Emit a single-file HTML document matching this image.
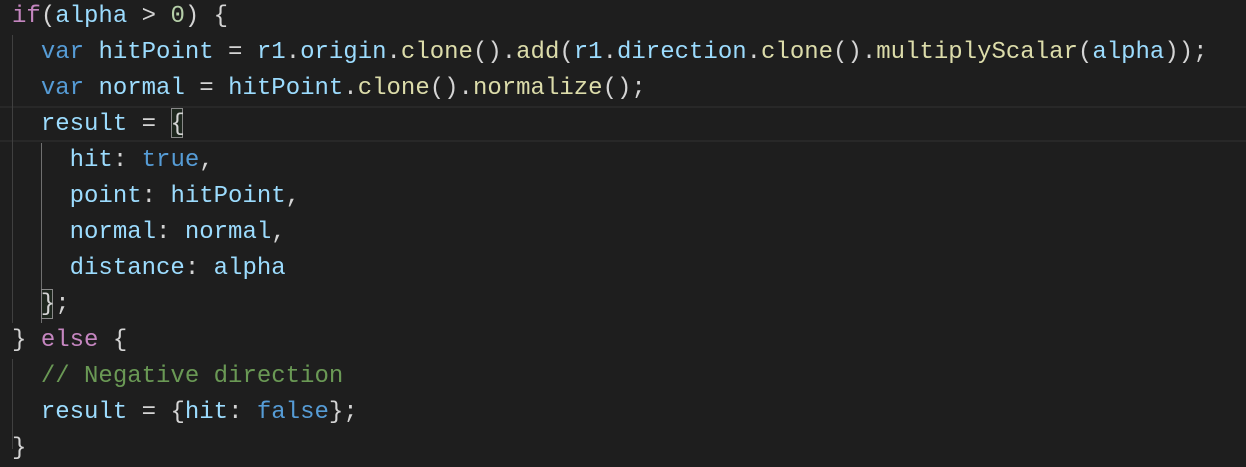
<!DOCTYPE html>
<html><head><style>
body{margin:0;background:#1e1e1e;width:1246px;height:462px;overflow:hidden;position:relative}
.c{position:absolute;left:12px;top:-1px;font-family:"Liberation Mono","DejaVu Sans Mono",monospace;font-size:24px;line-height:36px;color:#d4d4d4;white-space:pre}
.k{color:#c586c0}.v{color:#9cdcfe}.s{color:#569cd6}.f{color:#dcdcaa}.n{color:#b5cea8}.m{color:#6a9955}
.g{position:absolute;width:1px;background:#404040}
.hl{position:absolute;left:0;right:0;top:106px;height:32px;border-top:2px solid #282828;border-bottom:2px solid #282828}
.br{position:absolute;width:12px;height:30px;border:1px solid #888;background:rgba(30,60,30,.3);box-sizing:border-box}
</style></head><body>
<div class="hl"></div>
<div class="g" style="left:12px;top:35px;height:288px"></div>
<div class="g" style="left:41px;top:143px;height:180px;background:#707070"></div>
<div class="g" style="left:12px;top:359px;height:90px"></div>
<div class="br" style="left:171px;top:108px"></div>
<div class="br" style="left:41px;top:289px"></div>
<div class="c"><span class="k">if</span>(<span class="v">alpha</span> &gt; <span class="n">0</span>) {
  <span class="s">var</span> <span class="v">hitPoint</span> = <span class="v">r1</span>.<span class="v">origin</span>.<span class="f">clone</span>().<span class="f">add</span>(<span class="v">r1</span>.<span class="v">direction</span>.<span class="f">clone</span>().<span class="f">multiplyScalar</span>(<span class="v">alpha</span>));
  <span class="s">var</span> <span class="v">normal</span> = <span class="v">hitPoint</span>.<span class="f">clone</span>().<span class="f">normalize</span>();
  <span class="v">result</span> = {
    <span class="v">hit</span>: <span class="s">true</span>,
    <span class="v">point</span>: <span class="v">hitPoint</span>,
    <span class="v">normal</span>: <span class="v">normal</span>,
    <span class="v">distance</span>: <span class="v">alpha</span>
  };
} <span class="k">else</span> {
  <span class="m">// Negative direction</span>
  <span class="v">result</span> = {<span class="v">hit</span>: <span class="s">false</span>};
}</div>
</body></html>
